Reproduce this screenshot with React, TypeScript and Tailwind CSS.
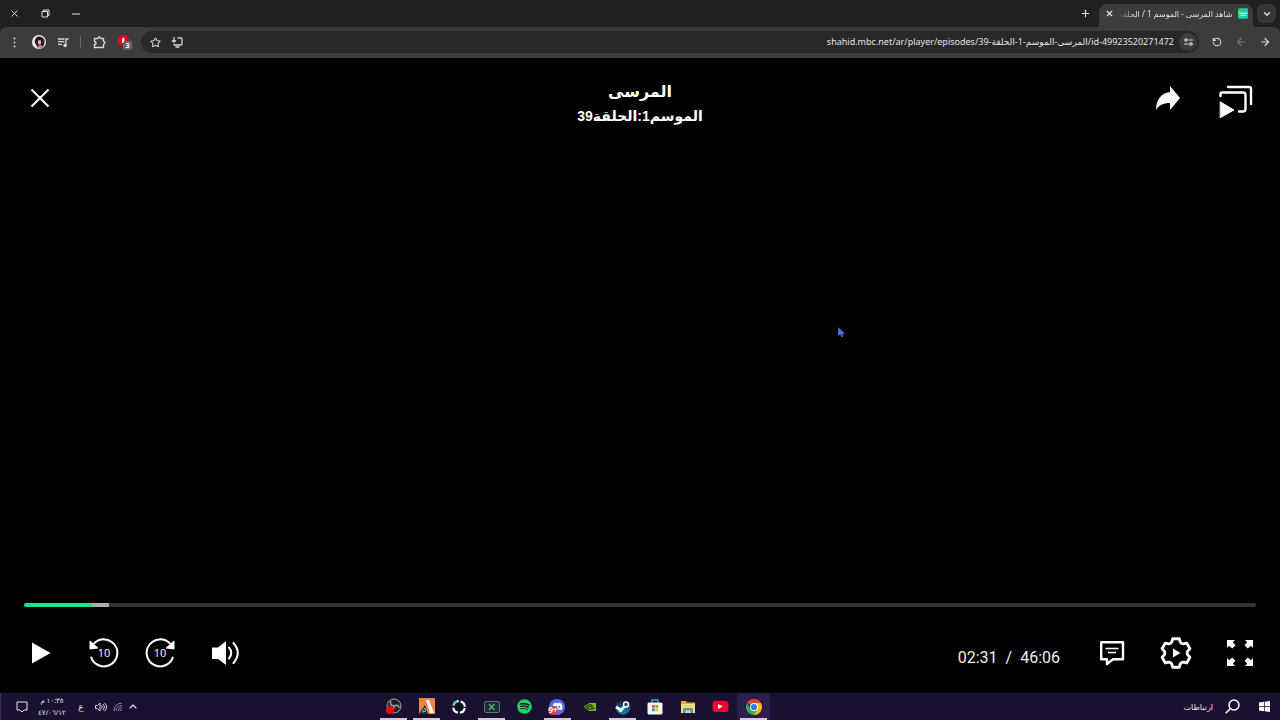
import React from "react";
import { FaSpotify, FaDiscord, FaYoutube } from "react-icons/fa";
import { SiNvidia } from "react-icons/si";
import { Star, ChevronDown, ChevronUp, Plus, X, ArrowLeft, ArrowRight, RotateCcw } from "lucide-react";

type IconButtonProps = {
  label: string;
  className?: string;
  children?: React.ReactNode;
};

function IconButton({ label, className = "", children }: IconButtonProps) {
  return (
    <button type="button" aria-label={label} className={`flex shrink-0 items-center justify-center ${className}`}>
      {children}
    </button>
  );
}

function TabStrip() {
  return (
    <div className="flex h-[27px] shrink-0 items-stretch bg-[#1f2120] text-[#e3e3e3]">
      <IconButton label="إغلاق" className="w-[29px]">
        <X size={11} strokeWidth={2} />
      </IconButton>
      <IconButton label="استعادة" className="w-8">
        <svg width="9" height="9" viewBox="0 0 9 9" fill="none" stroke="currentColor">
          <path d="M1 2.5h5.5V8H1zM2.500 2.500V1h5.500v5.500H6.500" />
        </svg>
      </IconButton>
      <IconButton label="تصغير" className="w-[30px]">
        <svg width="8" height="2" viewBox="0 0 8 2">
          <path d="M0 1h8" stroke="currentColor" />
        </svg>
      </IconButton>
      <div className="flex-1" />
      <IconButton label="علامة تبويب جديدة" className="w-7">
        <Plus size={11} strokeWidth={2.4} />
      </IconButton>
      <div className="mt-1 flex w-[154px] items-center rounded-t-lg bg-[#3c3c3c] pb-1 pl-1 pr-[5px]">
        <IconButton label="إغلاق علامة التبويب" className="w-3">
          <X size={9} strokeWidth={3} />
        </IconButton>
        <div
          dir="rtl"
          className="ml-1 mr-[5px] flex-1 whitespace-nowrap text-[8px] leading-4 [mask-image:linear-gradient(to_right,transparent,black_16px)]"
        >
          شاهد المرسى - الموسم 1 / الحلقة
        </div>
        <svg width="11" height="11" viewBox="0 0 11 11">
          <defs>
            <linearGradient id="shahid" x1="0" x2="1">
              <stop offset="0" stopColor="#13e27c" />
              <stop offset="1" stopColor="#1ec3c8" />
            </linearGradient>
          </defs>
          <rect width="11" height="11" rx="2" fill="url(#shahid)" />
          <path d="M2 4v1.500h7V4M4.300 4v1.500M6.700 4v1.500M2.500 7.500h6" stroke="#d8fff0" fill="none" strokeWidth=".8" />
        </svg>
      </div>
      <div className="flex w-[27px] items-center justify-center">
        <IconButton label="البحث في علامات التبويب" className="size-[19px] rounded-md bg-[#343635]">
          <ChevronDown size={10} strokeWidth={3} />
        </IconButton>
      </div>
    </div>
  );
}

function Toolbar() {
  return (
    <div className="bg-[#1f2120]">
      <div className="flex h-[31px] shrink-0 items-center rounded-t-md bg-[#3c3c3c] pb-px text-[#d6d6d6]">
        <IconButton label="القائمة" className="w-[29px]">
          <svg width="3" height="11" viewBox="0 0 3 11" fill="currentColor">
            <circle cx="1.500" cy="1.500" r="1" />
            <circle cx="1.500" cy="5.500" r="1" />
            <circle cx="1.500" cy="9.500" r="1" />
          </svg>
        </IconButton>
        <IconButton label="الملف الشخصي" className="w-5">
          <svg width="14" height="14" viewBox="0 0 14 14">
            <circle cx="7" cy="7" r="7" fill="#f0e8ea" />
            <path d="M3 8C2 3 6 .5 9 2c4 1 4 5 3 8l-2 3H6C5 11 4 10 3 8z" fill="#241e22" />
            <path d="M6 6q2-2 3 0v3l-2 1-1-2z" fill="#dfb0b2" />
            <path d="M6 11l3-1 2 2a7 7 0 0 1-5 1.700z" fill="#d08793" />
          </svg>
        </IconButton>
        <IconButton label="عناصر التحكم في الوسائط" className="w-7">
          <svg width="12" height="11" viewBox="0 0 12 11" fill="none" stroke="currentColor" strokeWidth="1.300">
            <path d="M1 2h6.500M1 4.700h6.500M1 7.400h4M9 8.500V2h2.500" />
            <circle cx="8" cy="8.500" r="1.100" fill="currentColor" />
          </svg>
        </IconButton>
        <div className="mx-[3px] h-3 w-px bg-[#6a6a6a]" />
        <IconButton label="الإضافات" className="ml-[5px] w-5">
          <svg width="13" height="13" viewBox="0 0 13 13" fill="none" stroke="currentColor" strokeWidth="1.400" strokeLinejoin="round">
            <path d="M1.500 2.500H5q0-1.500 1.200-1.500T7.400 2.500H10.500V5.500q1.500 0 1.500 1.300T10.500 8.100V11.500H1.500V8.500Q3 8.500 3 7T1.500 5.500z" />
          </svg>
        </IconButton>
        <IconButton label="مانع الإعلانات، 3" className="ml-[6px] w-5">
          <svg width="16" height="16" viewBox="0 0 16 16">
            <path d="M4 1h5l3 3v5l-3 3H4L1 9V4z" fill="#d80920" />
            <path d="M5 9V5q1-2 2.500-1v5z" fill="#fff" />
            <rect x="6" y="7" width="9" height="9" rx="2" fill="#666" />
            <text x="10.500" y="14" textAnchor="middle" fontSize="7" fontWeight="700" fill="#fff" fontFamily="Open Sans, sans-serif">3</text>
          </svg>
        </IconButton>
        <div className="ml-1.5 mr-1.5 flex h-[22px] flex-1 items-center rounded-full bg-[#282828] pl-1.5 pr-[2px]">
          <IconButton label="إضافة إشارة مرجعية" className="w-4">
            <Star size={11} strokeWidth={2.2} />
          </IconButton>
          <IconButton label="تثبيت التطبيق" className="ml-1.5 w-4">
            <svg width="12" height="11" viewBox="0 0 12 11" fill="none" stroke="currentColor" strokeWidth="1.300">
              <path d="M6.500 1H10q1 0 1 1v5q0 1-1 1H3.500Q2.500 8 2.500 7M4.500 10h4M3 0v5M1 3.200l2 2 2-2" />
            </svg>
          </IconButton>
          <input
            aria-label="شريط العناوين"
            dir="ltr"
            className="min-w-0 flex-1 bg-transparent px-[5px] text-right text-[9px] leading-4 text-[#e3e3e3] outline-none"
            defaultValue="shahid.mbc.net/ar/player/episodes/المرسى-الموسم-1-الحلقة-39/id-49923520271472"
          />
          <IconButton label="معلومات الموقع" className="size-[18px] rounded-full bg-[#3c3c3c]">
            <svg width="9" height="8" viewBox="0 0 9 8" fill="none" stroke="currentColor" strokeWidth="1.200">
              <circle cx="2" cy="2" r="1.200" />
              <path d="M4.500 2H9M0 6h4.500" />
              <circle cx="7" cy="6" r="1.200" />
            </svg>
          </IconButton>
        </div>
        <IconButton label="إعادة التحميل" className="w-6">
          <RotateCcw size={10} strokeWidth={2.6} />
        </IconButton>
        <IconButton label="إلى الأمام" className="w-6 text-[#777]">
          <ArrowLeft size={12} strokeWidth={2.400} />
        </IconButton>
        <IconButton label="رجوع" className="mr-[3px] w-6">
          <ArrowRight size={12} strokeWidth={2.400} />
        </IconButton>
      </div>
    </div>
  );
}

function SkipIcon({ forward = false }: { forward?: boolean }) {
  return (
    <svg width="32" height="32" viewBox="0 0 32 32">
      <g transform={forward ? "translate(32 0) scale(-1 1)" : undefined}>
        <path d="M6.300 6.300A13.500 13.500 0 1 1 3.200 20.600" fill="none" stroke="#fff" strokeWidth="2" strokeLinecap="round" />
        <path d="M2 4v8l7.800-1z" fill="#fff" stroke="#fff" strokeLinejoin="round" />
      </g>
      <text x="16" y="20" textAnchor="middle" fontSize="11" fontWeight="400" fill="#fff" fontFamily="Open Sans, sans-serif">10</text>
    </svg>
  );
}

function gearPath() {
  const points: string[] = [];
  const corners = [[-27, 11.2], [-21, 11.8], [-13, 14.6], [13, 14.6], [21, 11.8], [27, 11.2]];
  for (let tooth = 0; tooth < 6; tooth++) {
    for (const [offset, radius] of corners) {
      const a = ((tooth * 60 + offset - 90) * Math.PI) / 180;
      points.push(`${(16 + radius * Math.cos(a)).toFixed(2)} ${(16 + radius * Math.sin(a)).toFixed(2)}`);
    }
  }
  return `M${points.join("L")}Z`;
}

function Player() {
  return (
    <main className="flex flex-1 flex-col bg-black text-white">
      <header className="grid grid-cols-[1fr_auto_1fr] items-start px-6 pt-[22px]">
        <div className="flex pt-[2px]">
          <IconButton label="إغلاق المشغل" className="size-8">
            <svg width="20" height="20" viewBox="0 0 20 20">
              <path d="M1.500 1.500l17 17M18.500 1.500l-17 17" stroke="#fff" strokeWidth="2" />
            </svg>
          </IconButton>
        </div>
        <div dir="rtl" className="text-center font-['Liberation_Sans','DejaVu_Sans',sans-serif] font-bold">
          <h1 className="text-base leading-6">المرسى</h1>
          <p className="text-sm leading-6">الموسم1:الحلقة39</p>
        </div>
        <div className="flex justify-end gap-9 pr-1 pt-[2px]">
          <IconButton label="مشاركة" className="size-8">
            <svg width="26" height="26" viewBox="0 0 26 26">
              <path d="M15 1l10 12-10 12v-7C8 18 4 20 1 25 1 15 6 8 15 7z" fill="#fff" />
            </svg>
          </IconButton>
          <IconButton label="الحلقات" className="h-10 w-8">
            <svg width="34" height="34" viewBox="0 0 34 34" className="shrink-0" fill="none" stroke="#fff" strokeWidth="2.400" strokeLinecap="round">
              <path d="M9 2H30Q32 2 32 4V19M1.500 11V9Q1.500 7.500 3 7.500H24Q26.500 7.500 26.500 10V24Q26.500 26.500 24 26.500H20" />
              <path d="M1.500 17L15 25 1.500 32.500z" fill="#fff" strokeWidth="1" strokeLinejoin="round" />
            </svg>
          </IconButton>
        </div>
      </header>
      <div className="flex-1" />
      <div className="flex px-6">
        <input
          type="range"
          aria-label="تقدم التشغيل"
          min="0"
          max="2766"
          defaultValue="151"
          className="h-1 w-full appearance-none rounded-full bg-[linear-gradient(to_right,#24df91_5.5%,#adadad_5.5%,#adadad_6.9%,#333_6.9%)] [&::-webkit-slider-thumb]:size-0 [&::-webkit-slider-thumb]:appearance-none"
        />
      </div>
      <div className="flex items-center px-6 pb-[22px] pt-7">
        <IconButton label="تشغيل" className="mr-8 size-8">
          <svg width="32" height="32" viewBox="0 0 32 32">
            <path d="M8 5.500L26.500 16 8 26.500z" fill="#fff" />
          </svg>
        </IconButton>
        <IconButton label="رجوع 10 ثوان" className="mr-6 size-8">
          <SkipIcon />
        </IconButton>
        <IconButton label="تقديم 10 ثوان" className="mr-8 size-8">
          <SkipIcon forward />
        </IconButton>
        <IconButton label="مستوى الصوت" className="size-9">
          <svg width="32" height="32" viewBox="0 0 32 32">
            <path d="M2 10.500h6L16 4v24l-8-6H2z" fill="#fff" />
            <path d="M19 10.500q4.500 5.500 0 11M23.500 6q8.500 10 0 20" fill="none" stroke="#fff" strokeWidth="2" strokeLinecap="round" />
          </svg>
        </IconButton>
        <div className="flex-1" />
        <div className="mr-9 flex gap-2 pt-[10px] font-['Roboto',sans-serif] text-base leading-6 text-[#eee]">
          <span>02:31</span>
          <span>/</span>
          <span>46:06</span>
        </div>
        <div className="flex gap-8">
          <IconButton label="الترجمة" className="size-8">
            <svg width="32" height="32" viewBox="0 0 32 32" fill="none" stroke="#fff" strokeLinejoin="round">
              <path d="M5.200 5.200h21.800v17H17l-6 4.800v-4.800H5.200z" strokeWidth="2.400" />
              <path d="M9.500 11.500h13M12 15.500h8" strokeWidth="1.600" />
            </svg>
          </IconButton>
          <IconButton label="الإعدادات" className="size-8">
            <svg width="32" height="32" viewBox="0 0 32 32">
              <path d={gearPath()} fill="none" stroke="#fff" strokeWidth="2.800" strokeLinejoin="round" />
              <path d="M13 11.500L20.500 16 13 20.500z" fill="#fff" />
            </svg>
          </IconButton>
          <IconButton label="ملء الشاشة" className="size-8">
            <svg width="32" height="32" viewBox="0 0 32 32" fill="#fff">
              {[0, 90, 180, 270].map((angle) => (
                <path key={angle} transform={`rotate(${angle} 16 16)`} d="M3 3h8L8.800 5.200l2.700 3L8.200 11.500l-3-2.700L3 11z" />
              ))}
            </svg>
          </IconButton>
        </div>
      </div>
    </main>
  );
}

const apps: { name: string; running?: boolean; current?: boolean; icon: React.ReactNode }[] = [
  {
    name: "OBS",
    running: true,
    icon: (
      <svg width="17" height="17" viewBox="0 0 17 17">
        <circle cx="9" cy="8" r="7" fill="#242226" stroke="#aaa" />
        <path d="M9 8Q4 7 6 3M9 8q5-2 5 2M9 8q0 4-3 4" fill="none" stroke="#999" strokeWidth="1.600" />
        <circle cx="5" cy="12" r="4" fill="#ef0b12" />
      </svg>
    ),
  },
  {
    name: "Studio",
    running: true,
    icon: (
      <svg width="17" height="17" viewBox="0 0 17 17">
        <rect x="1" width="16" height="16" fill="#ef8445" />
        <path d="M8 2h3l5 13h-4z" fill="#fff" />
        <path d="M1 16L7 7l3 9z" fill="#122c32" />
        <path d="M4 14l3-4 1 3-3 1z" fill="none" stroke="#5cc6c6" />
      </svg>
    ),
  },
  {
    name: "Capture",
    icon: (
      <svg width="16" height="16" viewBox="0 0 16 16">
        <circle cx="8" cy="8" r="5" fill="#07151c" />
        <circle cx="8" cy="8" r="5.800" fill="none" stroke="#fff" strokeWidth="2.200" strokeDasharray="7 2.110" strokeDashoffset="-1" />
        <path d="M2.500 6A6 6 0 0 1 6 2.500" fill="none" stroke="#3eb7e9" strokeWidth="2.200" />
      </svg>
    ),
  },
  {
    name: "Xbox Remote",
    running: true,
    icon: (
      <svg width="16" height="12" viewBox="0 0 16 12" fill="none">
        <rect x=".5" y=".5" width="15" height="11" rx="1.500" fill="#182c31" stroke="#57776f" />
        <path d="M5 3l5.500 6M10.500 3L5 9" stroke="#59b391" strokeWidth="1.300" />
      </svg>
    ),
  },
  { name: "Spotify", icon: <FaSpotify size={15} color="#1ed760" /> },
  {
    name: "Discord",
    running: true,
    icon: (
      <span className="relative flex size-4 items-center justify-center rounded-full bg-[#5865f2] text-white">
        <FaDiscord size={11} />
        <span className="absolute -left-px top-[7px] flex h-[9px] w-[10px] items-center justify-center rounded-full bg-[#d43b4f] text-[8px] font-bold leading-none">9+</span>
      </span>
    ),
  },
  { name: "NVIDIA", icon: <SiNvidia size={12} color="#76b900" /> },
  {
    name: "Steam",
    running: true,
    icon: (
      <svg width="16" height="16" viewBox="0 0 16 16">
        <defs>
          <linearGradient id="steam" x2="0" y2="1">
            <stop stopColor="#111b38" />
            <stop offset="1" stopColor="#1687bd" />
          </linearGradient>
        </defs>
        <circle cx="8" cy="8" r="7.500" fill="url(#steam)" />
        <path d="M1 8l5 3 5-5" fill="none" stroke="#fff" strokeWidth="2.800" />
        <circle cx="11" cy="5.500" r="2.500" fill="#26425e" stroke="#fff" strokeWidth="1.400" />
        <circle cx="5.500" cy="11" r="2" fill="#fff" />
      </svg>
    ),
  },
  {
    name: "Microsoft Store",
    icon: (
      <svg width="16" height="16" viewBox="0 0 16 16">
        <path d="M5 4V1h6v3" fill="none" stroke="#36a7e8" strokeWidth="1.400" />
        <rect x=".5" y="3.500" width="15" height="12" rx="1.500" fill="#f5f7fb" />
        <path d="M5 6h2.800v2.800H5z" fill="#f25022" />
        <path d="M8.400 6h2.800v2.800H8.400z" fill="#7fba00" />
        <path d="M5 9.400h2.800v2.800H5z" fill="#00a4ef" />
        <path d="M8.400 9.400h2.800v2.800H8.400z" fill="#ffb900" />
      </svg>
    ),
  },
  {
    name: "File Explorer",
    icon: (
      <svg width="16" height="14" viewBox="0 0 16 14">
        <path d="M1 1h5l1 1.500h8V13H1z" fill="#e8ae36" />
        <path d="M1 4h14v9H1z" fill="#ffdc72" />
        <path d="M3 13V8h10v5h-2.500v-2.500h-5V13z" fill="#4c9cc5" />
      </svg>
    ),
  },
  {
    name: "YouTube",
    icon: (
      <span className="relative flex items-center justify-center">
        <FaYoutube size={17} color="#f4002e" />
        <svg width="5" height="5" viewBox="0 0 5 5" className="absolute">
          <path d="M0 0l5 2.500L0 5z" fill="#fff" />
        </svg>
      </span>
    ),
  },
  {
    name: "Chrome",
    running: true,
    current: true,
    icon: (
      <svg width="16" height="16" viewBox="0 0 16 16">
        <path d="M8 8L1.070 4A8 8 0 0 1 14.930 4z" fill="#ea4335" />
        <path d="M8 8V4h6.930A8 8 0 0 1 8 16z" fill="#fbbc04" />
        <path d="M8 8l3.460 2L8 16A8 8 0 0 1 1.070 4L4.500 10z" fill="#34a853" />
        <circle cx="8" cy="8" r="4" fill="#fff" />
        <circle cx="8" cy="8" r="3.100" fill="#3478e5" />
      </svg>
    ),
  },
];

function Taskbar() {
  return (
    <footer className="flex h-[27px] shrink-0 items-stretch bg-[#1a1030] text-[#e9e5ee]">
      <div className="flex w-[377px] items-center border-l border-[#3a3050] pl-[15px]">
        <IconButton label="الإشعارات" className="w-3">
          <svg width="12" height="12" viewBox="0 0 12 12" fill="none" stroke="currentColor">
            <path d="M1 1h10v8H8l-2 2-2-2H1z" />
          </svg>
        </IconButton>
        <div dir="rtl" className="ml-2.5 w-7 whitespace-nowrap text-center text-[7px] leading-3">
          <div>١٠:٣٥ م</div>
          <div>٤٧/٠٦/١٢</div>
        </div>
        <div className="ml-[11px] w-2 text-center text-[9px]">ع</div>
        <IconButton label="الصوت" className="ml-2.5 w-3">
          <svg width="12" height="10" viewBox="0 0 12 10" fill="none" stroke="currentColor" strokeWidth=".9">
            <path d="M.5 3.500h2L5 1v8L2.500 6.500h-2zM6.500 3.500q1.500 1.500 0 3M8 2q3 3 0 6M9.500.8q4 4.200 0 8.400" />
          </svg>
        </IconButton>
        <IconButton label="الشبكة" className="ml-[5px] w-3">
          <svg width="10" height="10" viewBox="0 0 10 10" fill="none" stroke="#aaa4b5">
            <path d="M1 9Q1.500 1.500 9 1M3 9q.5-5 6-5.500M5 9q.5-3 4-3.500M7 9q.5-1.500 2-1.500" strokeWidth=".8" />
          </svg>
        </IconButton>
        <IconButton label="إظهار الرموز المخفية" className="ml-[3px] w-3">
          <ChevronUp size={13} strokeWidth={2.200} />
        </IconButton>
      </div>
      <div className="grid w-[393px] grid-cols-12">
        {apps.map((app) => (
          <button
            key={app.name}
            type="button"
            aria-label={app.name}
            className={`flex flex-col items-center pt-[2px] ${app.current ? "bg-[#2b1e4a]" : ""}`}
          >
            <span className="flex flex-1 items-center justify-center">{app.icon}</span>
            <span className={`h-0.5 w-[27px] ${app.running ? "bg-[#d9c6d2]" : ""}`} />
          </button>
        ))}
      </div>
      <div className="flex flex-1 items-center justify-end">
        <span className="mr-[11px] text-[8px]">ارتباطات</span>
        <IconButton label="بحث" className="mr-[18px] w-4">
          <svg width="15" height="15" viewBox="0 0 15 15" fill="none" stroke="#fff" strokeWidth="1.500">
            <circle cx="9" cy="6" r="5" />
            <path d="M5.500 9.500L.7 14.300" />
          </svg>
        </IconButton>
        <IconButton label="ابدأ" className="mr-2.5 w-3">
          <svg width="11" height="11" viewBox="0 0 11 11" fill="#fff">
            <path d="M0 1.500l5-.7v4.400H0zM5.700.7L11 0v5.200H5.700zM0 5.900h5v4.400l-5-.7zM5.700 5.900H11V11l-5.300-.7z" />
          </svg>
        </IconButton>
      </div>
    </footer>
  );
}

export default function App() {
  return (
    <div dir="ltr" className="relative flex min-h-screen flex-col bg-black font-['Noto_Sans','DejaVu_Sans',sans-serif]">
      <TabStrip />
      <Toolbar />
      <Player />
      <Taskbar />
      <svg width="7" height="11" viewBox="0 0 8 12" className="pointer-events-none absolute left-[838px] top-[327px]">
        <path d="M.5.500v9l2.200-2 1.500 3.500 1.500-.7L4.300 7h3z" fill="#3f74f0" stroke="#6f97f5" strokeWidth=".5" />
      </svg>
    </div>
  );
}
